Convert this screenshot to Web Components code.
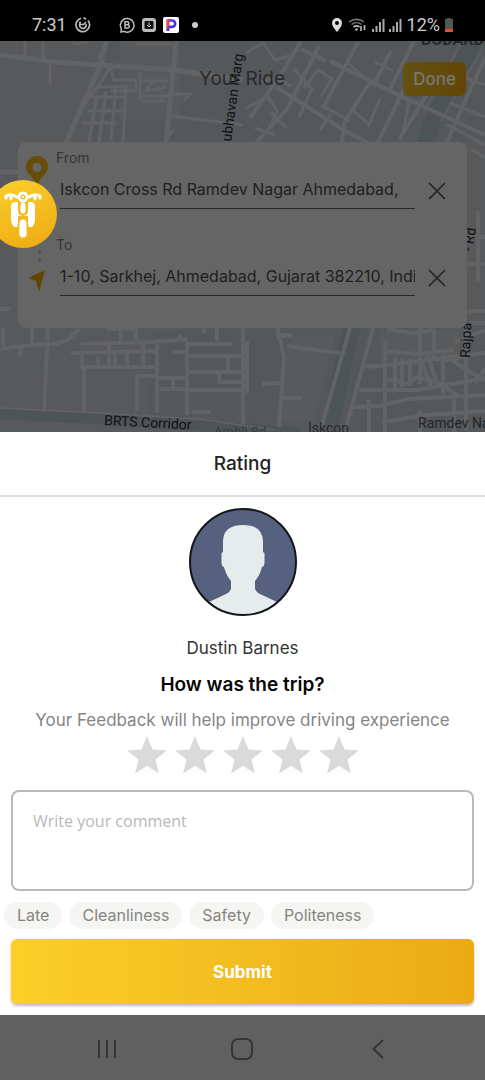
<!DOCTYPE html>
<html lang="en">
<head>
<meta charset="utf-8">
<meta name="viewport" content="width=device-width, initial-scale=1">
<title>Your Ride</title>
<style>
body { margin: 0; font-family: Inter, "Noto Sans", sans-serif; background: #fff; }
</style>
</head>
<body>
<ride-app></ride-app>
<script>
const define = (name, html, setup) => {
  const template = document.createElement('template');
  template.innerHTML = '<style>*{box-sizing:border-box}svg{display:block}</style>' + html;
  customElements.define(name, class extends HTMLElement {
    constructor() {
      super();
      const root = this.attachShadow({ mode: 'open' });
      root.append(template.content.cloneNode(true));
    }
    connectedCallback() { if (setup) setup(this, this.shadowRoot); }
  });
};

define('status-bar', `
<style>
:host { display: flex; justify-content: space-between; align-items: center; height: 41px; padding: 8px 32px 0; box-sizing: border-box; background: #000; color: #ccc; font: 18px/24px Roboto, sans-serif; }
div { display: flex; align-items: center; }
.left { gap: 8px; } .apps { gap: 7px; margin-left: 20px; } .right { gap: 5px; }
.dot { width: 6px; height: 6px; border-radius: 50%; background: #ccc; margin-left: 6px; }
</style>
<div class="left"><span>7:31</span>
<svg width="16" height="16" viewBox="0 0 16 16" fill="none" stroke="#bbb" stroke-width="1.7"><path d="M6 1.3A6.8 6.8 0 1 0 13 3.500M8.500 1.200A6.800 6.800 0 0 1 11 2"/><path d="M5 6.500A3.300 3.300 0 1 0 11 7M5 4.500v3h3M8 8l3-3"/></svg>
<div class="apps">
<svg width="16" height="16" viewBox="0 0 16 16" fill="none" stroke="#bbb" stroke-width="1.5"><path d="M2 15l.3-3.3A6.8 6.8 0 1 1 5 14.3L2 15z"/><path d="M6 4.800h2.300a1.500 1.500 0 0 1 0 3H6zM6 7.800h2.700a1.600 1.600 0 0 1 0 3.200H6z"/></svg>
<svg width="14" height="16" viewBox="0 0 14 16"><rect y="1" width="14" height="14" rx="3" fill="#bbb"/><rect x="2.5" y="4" width="9" height="8" rx="1" fill="#111"/><path d="M7 5v5M5 8l2 2 2-2" stroke="#bbb" fill="none"/></svg>
<svg width="16" height="16" viewBox="0 0 16 16"><rect width="16" height="16" rx="2" fill="#fff"/><path d="M3.500 2v12l3-2V5z" fill="#e8504a"/><path d="M5 3.500h4a3.200 3.200 0 0 1 0 6.400H5V14" fill="none" stroke="#4438dd" stroke-width="2.600"/><path d="M4 3.500h5" stroke="#b93ac0" stroke-width="2.600"/><path d="M4.500 3v8" stroke="#e8504a" stroke-width="2"/></svg>
<span class="dot"></span></div></div>
<div class="right">
<svg width="12" height="16" viewBox="0 0 12 16"><path fill="#ddd" fill-rule="evenodd" d="M6 1a5 5 0 0 1 5 5c0 3.600-5 9-5 9S1 9.600 1 6a5 5 0 0 1 5-5zm0 3a2 2 0 1 0 0 4 2 2 0 0 0 0-4z"/></svg>
<svg width="19" height="16" viewBox="0 0 19 16" fill="none" stroke-width="1.6"><path d="M1 5a12 12 0 0 1 15 0M3.500 7.500a8 8 0 0 1 10 0" stroke="#777"/><path d="M5.500 10a5 5 0 0 1 6 0" stroke="#bbb"/><circle cx="8.500" cy="12.500" r="1.200" fill="#bbb"/><path d="M13 9v5M16.500 8v5" stroke="#bbb"/></svg>
<svg width="30" height="16" viewBox="0 0 30 16" stroke="#aaa" stroke-width="2"><path d="M1 12v3M4.500 9v6M8 5v10M11.500 2v13M18 12v3M21.500 9v6M25 5v10M28.500 2v13"/></svg>
<span>12%</span>
<svg width="8" height="16" viewBox="1 0 8 16"><path d="M3 1h4v1h2v13H1V2h2z" fill="#555"/><path d="M1 12h8v3H1z" fill="#e05030"/></svg></div>`);

define('ride-map', `
<style>
:host { display: block; background: #58595b; }
svg { width: 100%; height: 100%; }
text { font-family: Roboto, sans-serif; }
</style>
<svg viewBox="0 0 485 391" preserveAspectRatio="xMidYMid slice" aria-hidden="true">
<g fill="#55585b"><path d="M110 0H485V100H90zM150 290l335-10v111H150z"/></g>
<g fill="#595a5c"><path d="M120 0h60v80h-60zM290 295h45l-22 85h-38zM380 290h80v30h-80z"/></g>
<g fill="none" stroke="#4d5455">
<path d="M474 0L434 76Q400 180 350 292L329 391" stroke-width="17"/>
<path d="M-5 373L80 377 200 385 300 391" stroke-width="10"/></g>
<g fill="none" stroke="#626364" stroke-width="3">
<path stroke-width="5" d="M0 14L55 21 174 29 243 39M103 18L66 102M107 0l-7 19M176 0l-4 42-6 60M0 131h20"/>
<path d="M25 0v14M43 0v20M50 22v22M72 0l4 3 12-2M136 3h36M83 65l19-25 8-15 4 14h22v11h-26M96 46h32M91 56h36M88 70h38M82 82h34M126 44l-3 57M116 44l-5 56M106 50l-7 52M97 55l-8 46M140 31v29M142 40h26M153 39l-7 11 20-4M142 55h26M142 60h24M171 53h19l-6 7M171 75l72 9M173 88l-5 9"/>
<path stroke-width="4" d="M250 77l34-48 17-29M276 46l66 42 99 53M319 5l-32 63-31 34M330 20l68 34 87 40M370 41l-25 39-9 61M404 48l-45 92M358 1l-35 66M301 8l25 12M391 10l-18 35M414 0l-24 48M444 25l-45 74M485 17l-25 54-28 65"/>
<path d="M246 12l17-10 12 17 14-4M260 41l17-3 14 7M246 67l22-11 9 14-10 23M255 87l20 7M294 28l18 20-13 28M304 47l14-18 14 9-11 17M271 71l16 16M349 23l17 15M375 21l18 9M321 64l29 16M331 73l-11 16M352 69l18 15M380 58l-12 28M409 61l-6 31M450 62l35 14M446 83l39 21M461 35l24 9M435 112l30 11M471 108l14 9"/>
<path stroke-width="4" d="M0 308l31-4 24-1 13-4 11-11M48 286l-4 85M32 287v17M3 287v18M10 268H0M22 307l-3 9M84 372v-44M71 312l84-2M81 303l72-2 34-3M107 288h29v11M121 288v12M109 300v26M82 312v14h75M98 316v10M115 312v14M127 312v14M143 303v24M157 303v69M137 370v-35h18M187 300v74M189 303h43M189 315h54M180 294v7M204 292v-10h13v18M172 311h15M189 331h54M228 315v16M219 333v8h24M158 337h29M158 348h29M173 337v11M189 349h54M192 371h19"/>
<path stroke-width="4" d="M350 287l-29 101M373 287l-27 100M277 285l7 31-5 70M287 305l53 7M281 294h11M276 295h10M262 343l18-1M282 357h20M243 286v97M247 300v52M365 325h20v66M385 300v75M387 288l26 4 22-3M388 310l29 3 37-4M370 326l115-14M359 349h59l67-12M352 366l27-1 29-7 77-4M369 359v32M395 317v30M402 318v28M410 318v27M419 315l13 32M427 313l11 32M440 320l24-4M443 313v40M453 320l32 20M466 287v102M475 342l10-14M420 286v57M434 289v28M455 301l30-12M387 338l21 5 8-7 21 5 20 13M382 381l45-7 58-4M420 370v21M454 358v33M478 170v70M467 196h18M466 223h19M468 270h17M470 282h15"/>
</g>
<g stroke="#616364" stroke-width="1.500" fill="none"><path d="M461 2L424 70M482 8L440 81M0 367l82 4 117 7 75 11"/></g>
<g font-size="14" fill="#111">
<text x="421" y="4" font-size="16" font-weight="700" fill="#292929">BODAKDEV</text>
<text transform="translate(231 101) rotate(-82)">ubhavan Marg</text>
<text transform="translate(104 384) rotate(3)">BRTS Corridor</text>
<text transform="translate(470 317) rotate(-88)">Rajpa</text>
<text transform="translate(472 211) rotate(-80)">- Rd</text>
<text x="308" y="392" fill="#292929">Iskcon</text>
<text x="214" y="395" font-size="13" fill="#3b3e40">Ambli Rd</text>
<text x="418" y="387" fill="#252525">Ramdev Na</text></g>
</svg>`);

define('address-field', `
<style>
:host { display: grid; grid-template-columns: 38px minmax(0, 1fr) 52px; }
label { grid-column: 2 / 4; font-size: 14px; line-height: 16px; color: #363636; }
.icon { grid-row: 1 / 3; justify-self: center; padding-top: var(--icon-top, 0); }
input { min-width: 0; height: 43px; margin: 0 0 0 4px; padding: 3px 0 0; border: 0; border-bottom: 1px solid #292929; border-radius: 0; background: none; color: #202020; font: 16px/24px Inter, sans-serif; outline: 0; }
button { border: 0; padding: 6px 8px 0 0; background: none; display: grid; place-items: center; height: 43px; }
</style>
<span class="icon"><slot></slot></span>
<label for="place"></label>
<input id="place" type="text">
<button type="button"><svg width="18" height="18" viewBox="0 0 18 18" stroke="#242424" stroke-width="1.700"><path d="M1 1l16 16M17 1L1 17"/></svg></button>`,
(host, root) => {
  root.querySelector('label').textContent = host.getAttribute('label');
  root.querySelector('input').value = host.getAttribute('value');
  root.querySelector('button').setAttribute('aria-label', 'Clear ' + host.getAttribute('label'));
});

define('ride-scene', `
<style>
:host { display: block; position: relative; height: 391px; overflow: hidden; }
ride-map { position: absolute; inset: 0; }
.content { position: relative; }
header { display: grid; grid-template-columns: 1fr auto 1fr; align-items: center; padding: 21px 19px 0 18px; }
h1 { grid-column: 2; margin: 0; font-size: 19px; line-height: 24px; font-weight: 400; color: #292929; }
.done { justify-self: end; width: 63px; height: 34px; padding: 0; border: 0; border-radius: 6px; background: linear-gradient(90deg, #64510f, #624607); color: #777; font: 500 17px/20px Inter, sans-serif; }
.card { margin: 46px 18px 0; height: 186px; border-radius: 8px; background: #656565; padding-top: 8px; display: flex; flex-direction: column; gap: 28px; }
address-field.to { --icon-top: 31px; }
.bubble { position: absolute; left: -11px; top: 139px; width: 68px; height: 68px; border: 0; border-radius: 50%; padding: 0; background: linear-gradient(160deg, #fbcf2d, #edaa12); display: grid; place-items: center; }
.dots { position: absolute; left: 38px; top: 209px; width: 3px; height: 12px; border-left: 3px dotted #555; }
</style>
<ride-map></ride-map>
<div class="content">
<header><h1>Your Ride</h1><button class="done" type="button">Done</button></header>
<div class="card">
<address-field label="From" value="Iskcon Cross Rd Ramdev Nagar Ahmedabad,"><svg width="24" height="36" viewBox="0 0 24 36"><path fill="#634f08" fill-rule="evenodd" d="M12 6a11 11 0 0 1 11 11c0 7-7 9-11 18C8 26 1 24 1 17A11 11 0 0 1 12 6zm0 7a4.500 4.500 0 1 0 0 9 4.500 4.500 0 0 0 0-9z"/></svg></address-field>
<address-field class="to" label="To" value="1-10, Sarkhej, Ahmedabad, Gujarat 382210, India"><svg width="20" height="24" viewBox="0 0 20 24"><path d="M18 2L12 24 9 13 1 10z" fill="#634606"/></svg></address-field>
</div></div>
<span class="dots"></span>
<button class="bubble" type="button" aria-label="Bike ride"><svg width="44" height="52" viewBox="0 0 44 52" fill="none" stroke-linecap="round">
<path d="M10 18q0-4 5-4h14q5 0 5 4v13q0 5-3 8h-4V28H17v11h-4q-3-3-3-8z" fill="#fff"/>
<path d="M22 12v11" stroke="#f3ba1c" stroke-width="10"/><path d="M22 37v9" stroke="#f3ba1c" stroke-width="11"/>
<path d="M22 17v6" stroke="#fff" stroke-width="5"/><path d="M22 35v11" stroke="#fff" stroke-width="7"/>
<path d="M5 8q5-3 11 1M39 8q-5-3-11 1M5 8v2M10 8v3M39 8v2M34 8v3" stroke="#fff" stroke-width="3"/><circle cx="22" cy="9" r="4" stroke="#fff" stroke-width="3"/><circle cx="22" cy="9" r="1.200" fill="#fff"/></svg></button>`);

define('star-rating', `
<style>
:host { display: block; }
fieldset { display: flex; justify-content: center; gap: 8px; border: 0; margin: 0; padding: 0; }
label { position: relative; display: block; color: #dadada; }
input { position: absolute; inset: 0; width: 100%; height: 100%; margin: 0; opacity: 0; }
</style>
<fieldset aria-label="Trip rating"></fieldset>`,
(host, root) => {
  root.querySelector('fieldset').innerHTML = [1, 2, 3, 4, 5].map(n =>
    `<label><input type="radio" name="stars" value="${n}" aria-label="${n} stars"><svg width="40" height="38" viewBox="0 0 40 38" fill="currentColor"><path d="M20 0l5.500 13.500L40 14.500 28.500 23.500 32 37.500 20 30 8 37.500l3.500-14L0 14.500l14.500-1z"/></svg></label>`).join('');
});

define('tag-chip', `
<style>
:host { display: block; }
button { height: 27px; padding: 0 13px; border: 0; border-radius: 14px; background: #f5f5f3; color: #85857f; font: 16px/27px Inter, sans-serif; display: block; }
</style>
<button type="button"><slot></slot></button>`);

define('rating-sheet', `
<style>
:host { display: block; background: #fff; text-align: center; padding-bottom: 11px; }
header { height: 65px; border-bottom: 2px solid #e0e0e0; display: grid; place-items: center; }
h2, h3, p { margin: 0; line-height: 24px; }
h2 { font-size: 19px; font-weight: 500; color: #222; }
.avatar { margin: 11px auto 0; width: 108px; height: 108px; }
.name { margin-top: 20px; font-size: 17px; color: #333; }
h3 { margin-top: 13px; font-size: 19px; font-weight: 600; color: #050505; }
.hint { margin-top: 11px; font-size: 17px; color: #858585; }
star-rating { margin-top: 4px; }
textarea { display: block; width: calc(100% - 22px); height: 101px; margin: 16px 11px 0; padding: 17px 20px; border: 2px solid #b9b9b9; border-radius: 8px; resize: none; font: 400 16px/24px "Open Sans", sans-serif; color: #444; background: #fff; }
textarea::placeholder { color: #b8b8b8; opacity: 1; }
.tags { display: flex; flex-wrap: wrap; gap: 7px; padding: 11px 4px 0; }
.submit { display: block; width: calc(100% - 22px); height: 65px; margin: 10px 11px 0; border: 0; border-radius: 6px; background: linear-gradient(90deg, #fbcf28, #ebaa14); box-shadow: 0 2px 3px #0004; color: #fff; font: 700 17px/24px Inter, sans-serif; }
</style>
<header><h2>Rating</h2></header>
<svg class="avatar" viewBox="0 0 108 108" role="img" aria-label="Driver"><defs><clipPath id="c"><circle cx="54" cy="54" r="53"/></clipPath></defs><circle cx="54" cy="54" r="53" fill="#56607f"/><path clip-path="url(#c)" fill="#e6eceb" d="M34 44V34q0-17 20-17t20 17v10l1.500 1v10q0 3-2.500 4-2 8-7 14v8q1 3 5 5l17 8 6 20H14l6-20 17-8q4-2 5-5v-8q-5-6-7-14-2.500-1-2.500-4V45z"/><circle cx="54" cy="54" r="53" fill="none" stroke="#15161c" stroke-width="2"/></svg>
<p class="name">Dustin Barnes</p>
<h3>How was the trip?</h3>
<p class="hint">Your Feedback will help improve driving experience</p>
<star-rating></star-rating>
<textarea aria-label="Comment" placeholder="Write your comment"></textarea>
<div class="tags"><tag-chip>Late</tag-chip><tag-chip>Cleanliness</tag-chip><tag-chip>Safety</tag-chip><tag-chip>Politeness</tag-chip></div>
<button class="submit" type="button">Submit</button>`);

define('nav-bar', `
<style>
:host { display: grid; grid-template-columns: repeat(3, 28%); justify-content: center; align-items: center; flex: 1; min-height: 65px; background: #606060; }
button { border: 0; padding: 2px 0 0; background: none; display: grid; place-items: center; }
svg { fill: none; stroke: #353535; stroke-width: 2; }
</style>
<button type="button" aria-label="Recent apps"><svg width="22" height="22" viewBox="0 0 22 22"><path d="M3 2v18M11 2v18M19 2v18"/></svg></button>
<button type="button" aria-label="Home"><svg width="22" height="22" viewBox="0 0 22 22"><rect x="1" y="1" width="20" height="20" rx="6"/></svg></button>
<button type="button" aria-label="Back"><svg width="22" height="22" viewBox="0 0 22 22"><path d="M16 2l-9.500 9L16 20"/></svg></button>`);

define('ride-app', `
<style>:host { display: flex; flex-direction: column; min-height: 100vh; }</style>
<status-bar></status-bar><ride-scene></ride-scene><rating-sheet></rating-sheet><nav-bar></nav-bar>`);
</script>
</body>
</html>
